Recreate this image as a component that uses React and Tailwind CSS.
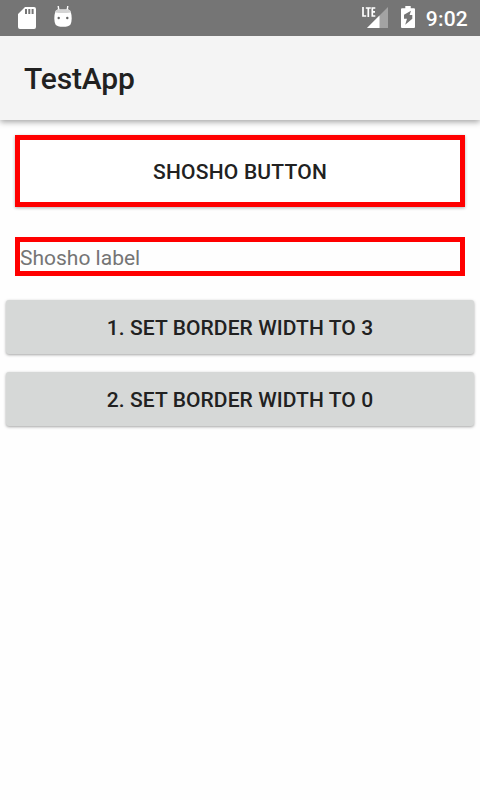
function StatusBar() {
  return (
    <header className="relative z-10 flex h-9 shrink-0 items-start bg-[#757575] text-white">
      <svg className="ml-[18px] mt-[7px] h-[22px] w-[18px]" viewBox="0 0 18 22">
        <path
          fill="#fff"
          fillRule="evenodd"
          d="M7 0h9a2 2 0 0 1 2 2v18a2 2 0 0 1-2 2H2a2 2 0 0 1-2-2V7zM7 2v5h2V2zM10.300 2v5h2V2zM13.600 2v5h2V2z"
        />
      </svg>
      <svg className="ml-[18px] mt-[5px] h-[23px] w-[18px]" viewBox="0 0 18 23">
        <path d="M4.200 1l.6 4M13.800 1l-.6 4" stroke="#fff" strokeWidth="1.400" />
        <path
          fill="#fff"
          d="M3.500 4.500h11Q16.800 5 17 8q.8 2 .7 5.500-.1 4-1.200 6Q14.800 21.800 9 21.800T1.500 19.500Q.4 17.500.3 13.500.2 10 1 8 1.200 5 3.500 4.500z"
        />
        <path fill="#d4d4d4" d="M3.500 4.500h11q2 .5 2.300 3Q9 8.600 1.200 7.500 1.500 5 3.500 4.500z" />
        <circle cx="4.700" cy="13" r="1.200" fill="#666" />
        <circle cx="13.300" cy="13" r="1.200" fill="#666" />
      </svg>
      <svg className="ml-auto mt-[5px] h-6 w-[27px]" viewBox="0 0 27 24">
        <path fill="#a3a3a3" d="M27 2v21H6z" />
        <path fill="#fff" d="M18.500 10.500V23H6z" />
        <path
          fill="none"
          stroke="#fff"
          strokeWidth="1.700"
          d="M2 2v9h3.200M4.800 3h5M7.300 3v8.900M14.300 3h-3v8h3M11.300 6.900h2.700"
        />
      </svg>
      <svg className="ml-[13px] mt-[6px] h-[22px] w-[14px]" viewBox="0 0 14 22">
        <path
          fill="#fff"
          d="M4.300 0h5.400v2.200h3.300q1 0 1 1V21q0 1-1 1H1q-1 0-1-1V3.200q0-1 1-1h3.300z"
        />
        <path fill="#757575" d="M10 4.800L3 8.800V12.800h3L4.200 18.800 11.300 12.800V9H8.600z" />
      </svg>
      <span className="ml-[11px] mr-3 mt-[5px] text-[21px] font-medium leading-7 tracking-[0.2px]">9:02</span>
    </header>
  );
}

function GrayButton({ children }) {
  return (
    <button className="h-[54px] w-full rounded-[3px] bg-[#d6d8d7] pt-px text-[21px] font-medium leading-6 tracking-[0.08px] text-[#212121] shadow-[0_1px_3px_rgba(0,0,0,0.36)]">
      {children}
    </button>
  );
}

export default function App() {
  return (
    <div className="flex h-[800px] w-[480px] flex-col overflow-hidden bg-[#fefefe] font-[Roboto,sans-serif]">
      <StatusBar />
      <div className="flex h-[84px] shrink-0 items-center bg-[#f4f4f4] pl-6 shadow-[0_2px_6px_rgba(0,0,0,0.36)]">
        <h1 className="pt-px text-[30px] font-medium leading-9 tracking-[-0.15px] text-[#212121]">TestApp</h1>
      </div>
      <main className="flex flex-col pt-[15px]">
        <button className="mx-[15px] h-[72px] border-[5px] border-[#ff0000] bg-white pt-px text-[21px] font-medium leading-6 tracking-[0.22px] text-[#212121] shadow-[0_1px_3px_rgba(0,0,0,0.3)]">
          SHOSHO BUTTON
        </button>
        <div className="mx-[15px] mt-[30px] flex h-[39px] items-center border-[5px] border-[#ff0000] pt-0.5 text-[21px] leading-6 text-[#757575]">
          Shosho label
        </div>
        <div className="mt-6 flex flex-col gap-[18px] px-1.5">
          <GrayButton>1. SET BORDER WIDTH TO 3</GrayButton>
          <GrayButton>2. SET BORDER WIDTH TO 0</GrayButton>
        </div>
      </main>
    </div>
  );
}
